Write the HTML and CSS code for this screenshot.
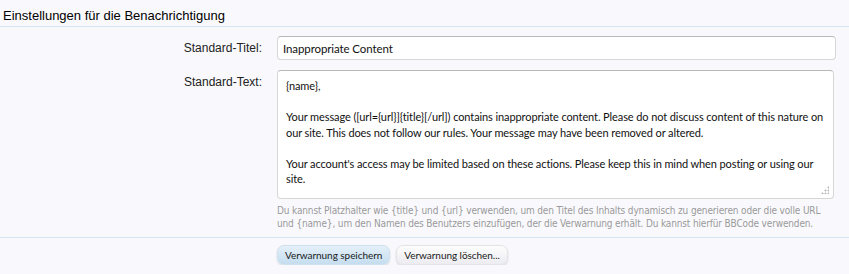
FILE: index.html
```html
<!DOCTYPE html>
<html lang="de">
<head>
    <meta charset="UTF-8">
    <title>Verwarnung bearbeiten</title>
    <link rel="stylesheet" href="styles.css">
</head>
<body>
    <form class="xenForm">
        <h3 class="textHeading">Einstellungen für die Benachrichtigung</h3>

        <dl class="ctrlUnit">
            <dt><label for="title">Standard-Titel:</label></dt>
            <dd><input type="text" id="title" class="textCtrl" value="Inappropriate Content"></dd>
        </dl>

        <dl class="ctrlUnit">
            <dt><label for="body">Standard-Text:</label></dt>
            <dd>
                <div class="textareaWrap">
                    <textarea id="body" class="textCtrl" rows="8">{name},

Your message ([url={url}]{title}[/url]) contains inappropriate content. Please do not discuss content of this nature on our site. This does not follow our rules. Your message may have been removed or altered.

Your account's access may be limited based on these actions. Please keep this in mind when posting or using our site.</textarea>
                    <span class="grip"></span>
                </div>
                <p class="explain">Du kannst Platzhalter wie {title} und {url} verwenden, um den Titel des Inhalts dynamisch zu generieren oder die volle URL und {name}, um den Namen des Benutzers einzufügen, der die Verwarnung erhält. Du kannst hierfür BBCode verwenden.</p>
            </dd>
        </dl>

        <dl class="ctrlUnit submitUnit">
            <dt></dt>
            <dd class="buttons">
                <button type="button" class="button primary">Verwarnung speichern</button>
                <button type="button" class="button">Verwarnung löschen...</button>
            </dd>
        </dl>
    </form>
</body>
</html>
```

FILE: styles.css
```css
body {
    margin: 0;
    background-color: #f9f9fd;
    font-family: Lato, "Open Sans", sans-serif;
    font-size: 11px;
    color: #000;
}
.textHeading {
    margin: 0;
    padding: 8px 3px 3px;
    font-family: "Liberation Sans", Arial, sans-serif;
    font-size: 13px;
    font-weight: normal;
    color: #000;
    border-bottom: 1px solid #d7e6f1;
}
.ctrlUnit {
    display: flex;
    margin: 9px 0 0;
}
.ctrlUnit + .ctrlUnit {
    margin-top: 10px;
}
.ctrlUnit dt {
    width: 262px;
    padding-right: 15px;
    padding-top: 5px;
    text-align: right;
    font-family: "Liberation Sans", Arial, sans-serif;
    font-size: 12px;
    color: #222;
}
.ctrlUnit dd {
    margin: 0;
    width: 559px;
}
.textCtrl {
    box-sizing: border-box;
    width: 100%;
    background: #fff;
    border: 1px solid #d6d6d6;
    border-top-color: #b8b8b8;
    border-radius: 4px;
    font-family: Lato, "Open Sans", sans-serif;
    font-size: 11px;
    letter-spacing: -0.1px;
    color: #111;
    outline: none;
}
input.textCtrl {
    height: 24px;
    padding: 2px 5px;
    font-size: 11.5px;
}
.textareaWrap {
    position: relative;
    width: 557px;
}
textarea.textCtrl {
    display: block;
    height: 129px;
    padding: 7px 8px 7px 8px;
    line-height: 15.5px;
    letter-spacing: -0.1px;
    resize: none;
}
.grip {
    position: absolute;
    right: 5px;
    bottom: 5px;
    width: 8px;
    height: 8px;
    background:
        radial-gradient(circle, #b5b5b5 0.9px, transparent 1.1px) 6px 0 / 3px 3px no-repeat,
        radial-gradient(circle, #b5b5b5 0.9px, transparent 1.1px) 3px 3px / 3px 3px no-repeat,
        radial-gradient(circle, #b5b5b5 0.9px, transparent 1.1px) 6px 3px / 3px 3px no-repeat,
        radial-gradient(circle, #b5b5b5 0.9px, transparent 1.1px) 0 6px / 3px 3px no-repeat,
        radial-gradient(circle, #b5b5b5 0.9px, transparent 1.1px) 3px 6px / 3px 3px no-repeat,
        radial-gradient(circle, #b5b5b5 0.9px, transparent 1.1px) 6px 6px / 3px 3px no-repeat;
}
.explain {
    width: 552px;
    margin: 5px 0 0;
    font-family: "DejaVu Sans Condensed", "DejaVu Sans", sans-serif;
    font-size: 10px;
    letter-spacing: -0.15px;
    line-height: 13px;
    color: #9a9a9a;
}
.submitUnit {
    border-top: 1px solid #d7e6f1;
    margin-top: 7px !important;
    padding-top: 7px;
}
.buttons {
    display: flex;
    gap: 6px;
}
.button {
    height: 20px;
    padding: 0 7px;
    border: 1px solid #e3e3e8;
    border-radius: 7px;
    background: linear-gradient(#fdfdfd, #ececf1);
    box-shadow: 0 1px 2px rgba(0,0,0,0.15);
    font-family: Lato, "Open Sans", sans-serif;
    font-size: 10px;
    letter-spacing: -0.05px;
    color: #1a1a1a;
    cursor: pointer;
}
.button.primary {
    border-color: #cfe1ef;
    background: linear-gradient(#e4f0f9, #c5ddef);
}
```
